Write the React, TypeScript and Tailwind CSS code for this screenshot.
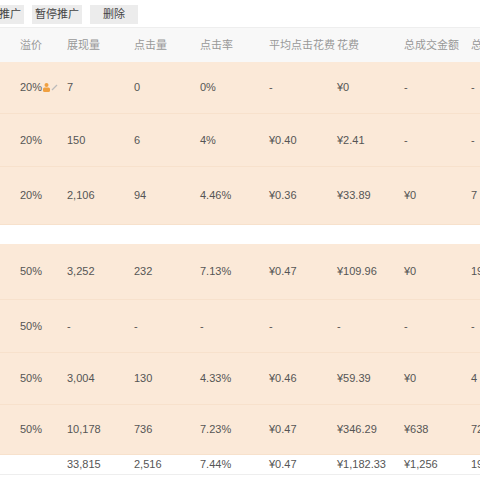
import React from "react";

const cols = "grid grid-cols-[47px_67px_66px_69px_68px_67px_67px_60px] pl-[20px]";
const rows: (string[] | null)[] = [
  ["20%", "7", "0", "0%", "-", "¥0", "-", "-"],
  ["20%", "150", "6", "4%", "¥0.40", "¥2.41", "-", "-"],
  ["20%", "2,106", "94", "4.46%", "¥0.36", "¥33.89", "¥0", "7"],
  null,
  ["50%", "3,252", "232", "7.13%", "¥0.47", "¥109.96", "¥0", "19"],
  ["50%", "-", "-", "-", "-", "-", "-", "-"],
  ["50%", "3,004", "130", "4.33%", "¥0.46", "¥59.39", "¥0", "4"],
  ["50%", "10,178", "736", "7.23%", "¥0.47", "¥346.29", "¥638", "72"],
];
const heights = ["h-[52px]", "h-[53px]", "h-[58px]", "", "h-[56px]", "h-[53px]", "h-[52px]", "h-[50px]"];

export default function App() {
  return (
    <div className="w-[480px] h-[480px] overflow-hidden bg-white text-[11px] text-[#555]" style={{ fontFamily: "'Liberation Sans', 'Noto Sans CJK SC', sans-serif" }}>
      <div className="flex gap-[8px] items-center h-[25px] pt-[3px] -ml-[26px]">
        {["暂停推广", "暂停推广", "删除"].map((t, i) => (
          <div key={i} className={`h-[19px] ${i === 2 ? "w-[48px]" : "w-[50px]"} bg-[#ececec] flex items-center justify-center text-[#444]`}>{t}</div>
        ))}
      </div>
      <div className="h-[3px] bg-white border-b border-[#eee]" />
      <div className={`${cols} h-[34px] items-center bg-[#f8f8f8] text-[#999]`}>
        {["溢价", "展现量", "点击量", "点击率", "平均点击花费", "花费", "总成交金额", "总"].map((h, i) => (
          <div key={i} className="whitespace-nowrap">{h}</div>
        ))}
      </div>
      {rows.map((r, i) =>
        r === null ? (
          <div key={i} className="h-[19px] bg-white" />
        ) : (
          <div key={i} className={`${cols} ${heights[i]} items-center bg-[#fbe9d8] border-b border-[#f7e1cc]`}>
            {r.map((c, j) => (
              <div key={j} className="whitespace-nowrap flex items-center">
                {c}
                {i === 0 && j === 0 && (
                  <span className="flex items-center">
                    <svg width="9" height="9" viewBox="0 0 9 9"><circle cx="4.5" cy="2" r="2" fill="#f0a040" /><rect x="1" y="4.5" width="7" height="4.5" rx="1.5" fill="#f0a040" /></svg>
                    <svg width="7" height="7" viewBox="0 0 7 7"><path d="M1 6 L6 1" stroke="#bbb" strokeWidth="1.3" /></svg>
                  </span>
                )}
              </div>
            ))}
          </div>
        )
      )}
      <div className={`${cols} h-[20px] items-center bg-white border-b border-[#eee]`}>
        {["", "33,815", "2,516", "7.44%", "¥0.47", "¥1,182.33", "¥1,256", "19"].map((c, j) => (
          <div key={j} className="whitespace-nowrap">{c}</div>
        ))}
      </div>
    </div>
  );
}
